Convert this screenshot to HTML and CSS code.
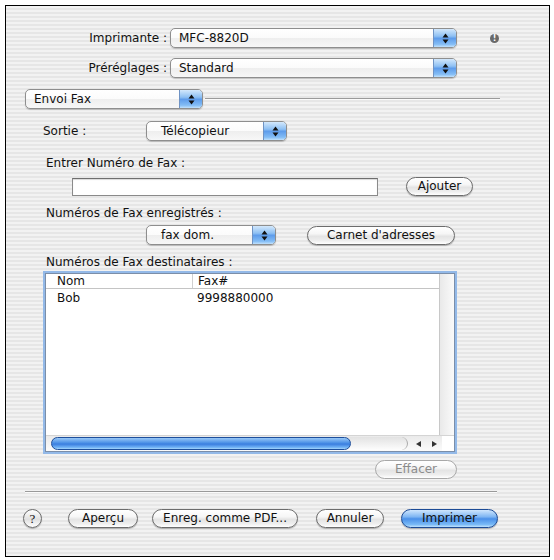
FILE: index.html
```html
<!DOCTYPE html>
<html lang="fr">
<head>
  <meta charset="UTF-8">
  <title>Imprimer</title>
  <link rel="stylesheet" href="styles.css">
</head>
<body>
<div class="dialog">

  <!-- printer / presets -->
  <div class="top-row row-printer">
    <span class="top-label">Imprimante :</span>
    <div class="popup popup-top">
      <span class="popup-text">MFC-8820D</span>
      <span class="popup-arrows"><svg width="7" height="11" viewBox="0 0 7 11"><path d="M0.5 4.5 L3.5 0.5 L6.5 4.5 Z M0.5 6.5 L3.5 10.5 L6.5 6.5 Z" fill="#111"/></svg></span>
    </div>
    <span class="alert-icon">!</span>
  </div>

  <div class="top-row row-presets">
    <span class="top-label">Préréglages :</span>
    <div class="popup popup-top">
      <span class="popup-text">Standard</span>
      <span class="popup-arrows"><svg width="7" height="11" viewBox="0 0 7 11"><path d="M0.5 4.5 L3.5 0.5 L6.5 4.5 Z M0.5 6.5 L3.5 10.5 L6.5 6.5 Z" fill="#111"/></svg></span>
    </div>
  </div>

  <div class="pane-row">
    <div class="popup popup-pane">
      <span class="popup-text">Envoi Fax</span>
      <span class="popup-arrows"><svg width="7" height="11" viewBox="0 0 7 11"><path d="M0.5 4.5 L3.5 0.5 L6.5 4.5 Z M0.5 6.5 L3.5 10.5 L6.5 6.5 Z" fill="#111"/></svg></span>
    </div>
    <div class="pane-line"></div>
  </div>

  <!-- fax pane -->
  <div class="output-row">
    <span class="output-label">Sortie :</span>
    <div class="popup popup-output">
      <span class="popup-text">Télécopieur</span>
      <span class="popup-arrows"><svg width="7" height="11" viewBox="0 0 7 11"><path d="M0.5 4.5 L3.5 0.5 L6.5 4.5 Z M0.5 6.5 L3.5 10.5 L6.5 6.5 Z" fill="#111"/></svg></span>
    </div>
  </div>

  <div class="caption caption-enter">Entrer Numéro de Fax :</div>
  <div class="enter-row">
    <div class="text-field"></div>
    <button class="aqua-btn btn-add">Ajouter</button>
  </div>

  <div class="caption caption-saved">Numéros de Fax enregistrés :</div>
  <div class="saved-row">
    <div class="popup popup-saved">
      <span class="popup-text">fax dom.</span>
      <span class="popup-arrows"><svg width="7" height="11" viewBox="0 0 7 11"><path d="M0.5 4.5 L3.5 0.5 L6.5 4.5 Z M0.5 6.5 L3.5 10.5 L6.5 6.5 Z" fill="#111"/></svg></span>
    </div>
    <button class="aqua-btn btn-book">Carnet d'adresses</button>
  </div>

  <div class="caption caption-dest">Numéros de Fax destinataires :</div>
  <div class="list-box">
    <div class="list-main">
      <div class="list-body">
        <div class="list-head">
          <span class="col-name">Nom</span>
          <span class="col-fax">Fax#</span>
        </div>
        <div class="list-item">
          <span class="col-name">Bob</span>
          <span class="col-fax">9998880000</span>
        </div>
      </div>
      <div class="v-scroll"></div>
    </div>
    <div class="h-scroll">
      <div class="h-track"><div class="h-thumb"></div></div>
      <div class="h-arrows"><span class="arrow-left"></span><span class="arrow-right"></span></div>
      <div class="h-corner"></div>
    </div>
  </div>

  <div class="clear-row">
    <button class="aqua-btn btn-clear" disabled>Effacer</button>
  </div>

  <div class="separator"></div>

  <!-- dialog buttons -->
  <div class="bottom-row">
    <span class="help-btn">?</span>
    <button class="aqua-btn btn-preview">Aperçu</button>
    <button class="aqua-btn btn-pdf">Enreg. comme PDF...</button>
    <button class="aqua-btn btn-cancel">Annuler</button>
    <button class="aqua-btn btn-print">Imprimer</button>
  </div>

</div>
</body>
</html>
```

FILE: styles.css
```css
/* Page */
body {
  margin: 0;
  background: #fff;
  font-family: "DejaVu Sans", Verdana, sans-serif;
  font-size: 12px;
  color: #111;
}

.dialog {
  margin: 5px;
  width: 543px;
  height: 550px;
  border: 1px solid #000;
  background: repeating-linear-gradient(to bottom, #f2f2f2 0, #f2f2f2 2px, #e6e6e6 2px, #e6e6e6 4px);
  display: flex;
  flex-direction: column;
}

/* Popup menus */
.popup {
  display: flex;
  align-items: center;
  height: 18px;
  border: 1px solid #8e8e8e;
  border-radius: 5px;
  background: linear-gradient(to bottom, #ffffff 0%, #fbfbfb 50%, #eeeeee 51%, #f7f7f7 100%);
  box-shadow: 0 1px 1px rgba(0, 0, 0, 0.2);
  overflow: hidden;
}

.popup-text {
  flex: 1;
  padding-left: 8px;
  line-height: 18px;
  white-space: nowrap;
}

.popup-arrows {
  width: 22px;
  height: 18px;
  display: flex;
  align-items: center;
  justify-content: center;
  border-left: 1px solid #6f93c4;
  background: linear-gradient(to bottom, #d3e8fc 0%, #8ec0f3 40%, #5e9ceb 52%, #84bdf5 85%, #c2e2fd 100%);
}

/* Top rows */
.top-row {
  display: flex;
  align-items: center;
}

.row-printer {
  margin-top: 22px;
}

.row-presets {
  margin-top: 10px;
}

.top-label {
  width: 161px;
  text-align: right;
  padding-right: 3px;
}

.popup-top {
  width: 285px;
}

.alert-icon {
  margin-left: 33px;
  width: 9px;
  height: 9px;
  border-radius: 50%;
  background: #6a6a6a;
  color: #fff;
  font-size: 8px;
  font-weight: bold;
  line-height: 9px;
  text-align: center;
}

.pane-row {
  display: flex;
  align-items: center;
  margin-top: 11px;
  padding-left: 19px;
}

.popup-pane {
  width: 176px;
}

.pane-line {
  flex: 1;
  height: 1px;
  margin: 0 49px 0 2px;
  background: #9a9a9a;
  border-bottom: 1px solid #fafafa;
}

/* Fax pane */
.output-row {
  display: flex;
  align-items: center;
  margin-top: 12px;
  padding-left: 37px;
}

.output-label {
  width: 103px;
}

.popup-output {
  width: 139px;
}

.popup-output .popup-text {
  padding-left: 14px;
}

.caption {
  padding-left: 40px;
  line-height: 16px;
}

.caption-enter {
  margin-top: 14px;
}

.enter-row {
  display: flex;
  align-items: center;
  margin-top: 6px;
  padding-left: 66px;
}

.text-field {
  width: 304px;
  height: 16px;
  background: #fff;
  border: 1px solid #8a8a8a;
  border-top-color: #6e6e6e;
  box-shadow: inset 0 1px 1px rgba(0, 0, 0, 0.15);
}

.caption-saved {
  margin-top: 9px;
}

.saved-row {
  display: flex;
  align-items: center;
  margin-top: 4px;
  padding-left: 140px;
}

.popup-saved {
  width: 128px;
}

.popup-saved .popup-text {
  padding-left: 14px;
}

.caption-dest {
  margin-top: 9px;
}

/* Buttons */
.aqua-btn {
  height: 19px;
  padding: 0;
  border: 1px solid #6c6c6c;
  border-radius: 10px;
  background: linear-gradient(to bottom, #ffffff 0%, #f6f6f6 40%, #e4e4e4 55%, #eeeeee 80%, #ffffff 100%);
  box-shadow: 0 1px 1px rgba(0, 0, 0, 0.25);
  font-family: inherit;
  font-size: 12px;
  color: #111;
  line-height: 17px;
}

.btn-add {
  width: 67px;
  margin-left: 28px;
}

.btn-book {
  width: 148px;
  margin-left: 31px;
}

.btn-clear {
  width: 82px;
  color: #8c8c8c;
  border-color: #a8a8a8;
  box-shadow: none;
}

/* List */
.list-box {
  margin: 3px 0 0 39px;
  width: 408px;
  height: 177px;
  border: 1px solid #7b8ea8;
  box-shadow: 0 0 0 2px #93b9e8;
  background: #fff;
  display: flex;
  flex-direction: column;
}

.list-main {
  flex: 1;
  display: flex;
}

.list-body {
  flex: 1;
}

.v-scroll {
  width: 14px;
  border-left: 1px solid #c8c8c8;
  background: linear-gradient(to right, #e9e9e9, #fafafa);
}

.list-head,
.list-item {
  display: flex;
  line-height: 14px;
}

.list-head {
  border-bottom: 1px solid #c4c4c4;
  height: 14px;
}

.list-item {
  margin-top: 2px;
}

.col-name {
  width: 135px;
  padding-left: 11px;
}

.list-head .col-name {
  border-right: 1px solid #d0d0d0;
}

.col-fax {
  padding-left: 5px;
}

.h-scroll {
  height: 15px;
  display: flex;
  align-items: center;
  border-top: 1px solid #d4d4d4;
  background: linear-gradient(to bottom, #eaeaea, #fbfbfb);
}

.h-track {
  width: 356px;
  height: 13px;
  margin-left: 5px;
  border-radius: 7px;
  background: linear-gradient(to bottom, #e2e2e2, #fdfdfd);
  border-right: 1px solid #a9a9a9;
}

.h-thumb {
  width: 298px;
  height: 11px;
  border: 1px solid #1e4f9c;
  border-radius: 7px;
  background: linear-gradient(to bottom, #9ac9f7 0%, #4a8fe6 45%, #3a7ddf 55%, #70b2f5 85%, #a8d6fb 100%);
}

.h-arrows {
  width: 32px;
  display: flex;
  align-items: center;
  justify-content: space-around;
  padding-left: 2px;
}

.arrow-left,
.arrow-right {
  width: 0;
  height: 0;
  border-top: 3px solid transparent;
  border-bottom: 3px solid transparent;
}

.arrow-left {
  border-right: 5px solid #333;
}

.arrow-right {
  border-left: 5px solid #333;
}

.h-corner {
  flex: 1;
  height: 15px;
  background: #fff;
}

.clear-row {
  display: flex;
  margin-top: 8px;
  padding-left: 369px;
}

.separator {
  margin: 12px 0 0 19px;
  width: 472px;
  height: 1px;
  background: #9a9a9a;
  border-bottom: 1px solid #fbfbfb;
}

/* Dialog buttons */
.bottom-row {
  display: flex;
  align-items: center;
  margin-top: 16px;
  padding-left: 17px;
}

.help-btn {
  width: 17px;
  height: 17px;
  border: 1px solid #6c6c6c;
  border-radius: 50%;
  background: linear-gradient(to bottom, #ffffff, #e0e0e0 55%, #ffffff);
  box-shadow: 0 1px 1px rgba(0, 0, 0, 0.25);
  text-align: center;
  line-height: 17px;
  font-size: 13px;
  font-family: "Liberation Serif", serif;
}

.btn-preview {
  width: 70px;
  margin-left: 26px;
}

.btn-pdf {
  width: 146px;
  margin-left: 14px;
}

.btn-cancel {
  width: 68px;
  margin-left: 18px;
}

.btn-print {
  width: 97px;
  margin-left: 17px;
  border-color: #1c4b96;
  background: linear-gradient(to bottom, #cfe6fd 0%, #7fb6f3 40%, #4b90e9 52%, #78b9f6 85%, #c0e3fe 100%);
}
```
